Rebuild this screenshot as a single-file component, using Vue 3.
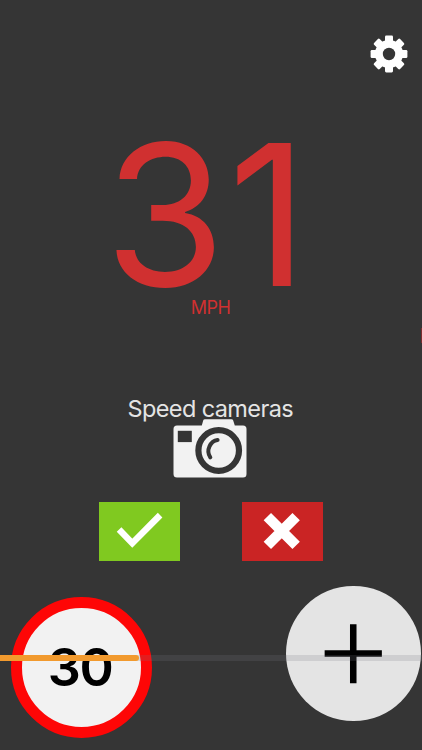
<script setup>
const speed = '31'
const limit = 30
const progress = 33
const toothAngles = [0, 45, 90, 135]
</script>

<template>
  <main class="screen">
    <header class="bar">
      <svg class="gear" viewBox="-19 -19 38 38" aria-label="Settings">
        <circle r="14" />
        <rect v-for="a in toothAngles" :key="a" x="-4" y="-18.4" width="8" height="36.8" rx="1.3" :transform="`rotate(${a})`" />
        <circle r="6.2" class="hole" />
      </svg>
    </header>

    <section class="speed">
      <div class="value">{{ speed }}</div>
      <div class="unit">MPH</div>
    </section>

    <section class="alert">
      <div class="title">Speed cameras</div>
      <svg class="camera" viewBox="0 0 74 60" aria-hidden="true">
        <path class="body" d="M4 6.500H28.800L30.200 1.500Q30.500 .3 32 .3H58.500Q59.800 .3 60.200 1.500L61.800 6.500H70Q73.500 6.500 73.500 10V55Q73.500 58.500 70 58.500H4Q.5 58.500 .5 55V10Q.5 6.500 4 6.500Z" />
        <rect class="dark" x="4.800" y="11.800" width="14" height="11.300" />
        <circle class="ring" cx="45.700" cy="31.500" r="20.300" />
        <path class="glint" d="M44.600 21C37.500 22 32.500 31 37.300 38.300" />
      </svg>
      <div class="actions">
        <button class="yes" aria-label="Confirm">
          <svg viewBox="0 0 81 59"><path d="M20.200 27.800L33.500 41.500L61.500 13.200" /></svg>
        </button>
        <button class="no" aria-label="Dismiss">
          <svg viewBox="0 0 81 59"><path d="M25.500 14.700L54.500 43.700M54.500 14.700L25.500 43.700" /></svg>
        </button>
      </div>
    </section>

    <footer class="bottom">
      <div class="sign">{{ limit }}</div>
      <button class="add" aria-label="Add">
        <svg viewBox="0 0 134 134"><path d="M38.500 67.200H95.500M67 38.200V97" /></svg>
      </button>
    </footer>
    <div class="track"><div class="fill" :style="{ width: progress + '%' }"></div></div>
    <div class="edge"></div>
  </main>
</template>

<style>
body { margin: 0; background: #353535; }
</style>

<style scoped>
.screen {
  position: relative;
  box-sizing: border-box;
  width: 422px;
  height: 750px;
  overflow: hidden;
  background: #353535;
  font-family: Inter, "Liberation Sans", sans-serif;
}
button { padding: 0; border: 0; display: block; }
svg { display: block; }
.bar { height: 73px; padding: 35px 14px 0 0; box-sizing: border-box; display: flex; justify-content: flex-end; }
.gear { width: 38px; height: 38px; fill: #fff; }
.hole { fill: #353535; }
.speed { height: 322px; color: #d03030; text-align: center; }
.value { height: 224px; padding-right: 7px; font-size: 196px; line-height: 284px; letter-spacing: 2.500px; }
.unit { padding-right: 1px; font-size: 18px; line-height: 22px; letter-spacing: -0.500px; }
.alert { height: 191px; padding-right: 1.500px; display: flex; flex-direction: column; align-items: center; }
.title { height: 24px; color: #e4e4e4; font-size: 23.500px; line-height: 28px; letter-spacing: -0.600px; white-space: nowrap; }
.camera { width: 74px; height: 60px; }
.body { fill: #f2f2f2; }
.dark { fill: #353535; }
.ring { fill: none; stroke: #353535; stroke-width: 6.200; }
.glint { fill: none; stroke: #353535; stroke-width: 4; stroke-linecap: round; }
.actions { display: flex; gap: 62.500px; margin: 23px 0 0 1px; }
.yes, .no { width: 80.500px; height: 58.500px; }
.yes { background: #80c920; }
.no { background: #ca2424; }
.yes path, .no path { fill: none; stroke: #fff; stroke-width: 6.500; }
.no path { stroke-width: 10.500; }
.bottom { display: flex; justify-content: space-between; padding: 0 1.500px 0 11px; }
.sign {
  box-sizing: border-box;
  width: 141px;
  height: 141px;
  margin-top: 11px;
  padding-right: 3px;
  border: 11.500px solid #fe0606;
  border-radius: 50%;
  background: #f2f2f2;
  color: #000;
  font-size: 52px;
  font-weight: 600;
  line-height: 119px;
  letter-spacing: -1.500px;
  text-align: center;
}
.add { width: 134.500px; height: 134.500px; border-radius: 50%; background: #e4e4e4; }
.add path { fill: none; stroke: #000; stroke-width: 6.500; }
.track { position: absolute; left: 0; right: 0; top: 654.500px; height: 6.500px; background: rgba(120, 120, 132, 0.2); }
.fill { height: 100%; background: #f29a2e; border-radius: 0 3px 3px 0; }
.edge { position: absolute; right: 0; top: 328px; width: 1px; height: 15px; background: #7c2d2d; }
</style>
